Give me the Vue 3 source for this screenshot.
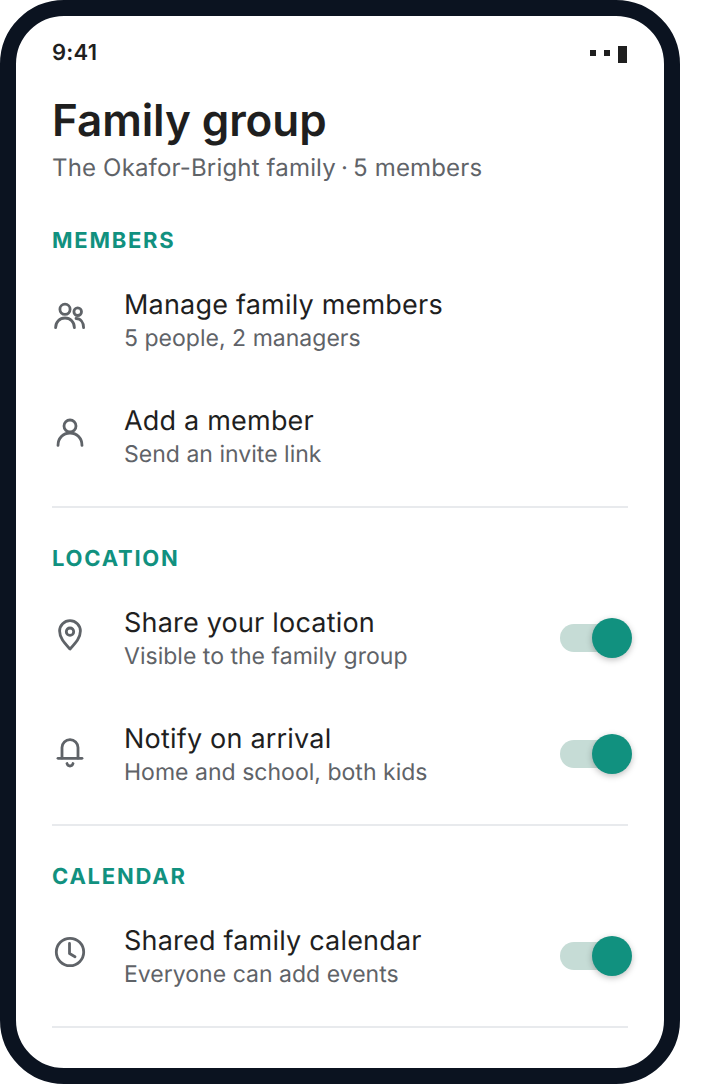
<template>
  <div class="phone">
    <div class="screen">
      <div class="status-bar">
        <span class="time">9:41</span>
        <div class="status-icons">
          <span class="dot"></span>
          <span class="dot"></span>
          <span class="battery"></span>
        </div>
      </div>

      <header class="page-head">
        <h1>Family group</h1>
        <p>The Okafor-Bright family <span class="sep">·</span> 5 members</p>
      </header>

      <section v-for="section in sections" :key="section.title" class="section">
        <h2>{{ section.title }}</h2>
        <div v-for="row in section.rows" :key="row.title" class="row">
          <svg class="icon" viewBox="0 0 36 36" fill="none" stroke="#5f6368" stroke-width="2.8" stroke-linecap="round" stroke-linejoin="round">
            <g v-if="row.icon === 'people'">
              <circle cx="13" cy="11.3" r="5.1" />
              <circle cx="25.7" cy="13.7" r="3.8" />
              <path d="M3.6 29.700c0-5.500 4-9.700 9.400-9.700s9.400 4.200 9.400 9.700" />
              <path d="M24 20.500c4.500 0 7.600 3.700 7.600 9.200" />
            </g>
            <g v-else-if="row.icon === 'person'">
              <circle cx="18" cy="12" r="6" />
              <path d="M6 31.400c0-7 5-12.400 12-12.400s12 5.400 12 12.400" />
            </g>
            <g v-else-if="row.icon === 'pin'">
              <path d="M18 33C12.500 27 7.600 22 7.600 15a10.400 10.400 0 0 1 20.800 0C28.400 22 23.500 27 18 33z" />
              <circle cx="18" cy="15.700" r="3.700" />
            </g>
            <g v-else-if="row.icon === 'bell'">
              <path d="M10 26V15.600a8 8 0 0 1 16 0V26" />
              <path d="M6 26.300h24" />
              <path d="M15 31.500c.5 2 1.500 2.500 3 2.500s2.500-.5 3-2.500" />
            </g>
            <g v-else>
              <circle cx="18" cy="18" r="13.700" />
              <path d="M17.500 9.500v10l5.500 3.200" />
            </g>
          </svg>
          <div class="row-text">
            <div class="row-title">{{ row.title }}</div>
            <div class="row-sub">{{ row.sub }}</div>
          </div>
          <div v-if="row.toggle" class="toggle">
            <span class="knob"></span>
          </div>
        </div>
      </section>
    </div>
  </div>
</template>

<script setup>
const sections = [
  {
    title: "MEMBERS",
    rows: [
      { icon: "people", title: "Manage family members", sub: "5 people, 2 managers" },
      { icon: "person", title: "Add a member", sub: "Send an invite link" },
    ],
  },
  {
    title: "LOCATION",
    rows: [
      { icon: "pin", title: "Share your location", sub: "Visible to the family group", toggle: true },
      { icon: "bell", title: "Notify on arrival", sub: "Home and school, both kids", toggle: true },
    ],
  },
  {
    title: "CALENDAR",
    rows: [
      { icon: "clock", title: "Shared family calendar", sub: "Everyone can add events", toggle: true },
    ],
  },
];
</script>

<style>
html,
body {
  background: #fff;
}
</style>

<style scoped>
.phone {
  width: 680px;
  height: 1084px;
  box-sizing: border-box;
  border: 16px solid #0b1320;
  border-radius: 64px;
  overflow: hidden;
  background: #fff;
  font-family: Inter, "Liberation Sans", sans-serif;
  color: #1f1f1f;
  text-rendering: geometricPrecision;
}

.screen {
  padding: 0 36px;
}

.status-bar {
  height: 72px;
  display: flex;
  align-items: center;
  justify-content: space-between;
}

.time {
  margin-top: 2px;
  font-size: 22px;
  font-weight: 600;
  letter-spacing: 0.2px;
}

.status-icons {
  display: flex;
  align-items: center;
  gap: 8px;
  margin: 5px 1px 0 0;
}

.dot {
  width: 6px;
  height: 5.500px;
  margin-bottom: 3px;
  background: #1f1f1f;
}

.battery {
  width: 9.500px;
  height: 17.500px;
  background: #1f1f1f;
}

.page-head {
  padding-bottom: 42px;
}

h1 {
  margin: 6px 0 6px;
  font-size: 44px;
  line-height: 52px;
  font-weight: 600;
  letter-spacing: -0.08px;
}

.page-head p {
  margin: 0;
  font-size: 24px;
  line-height: 32px;
  letter-spacing: 0.17px;
  color: #5f6368;
}

.sep {
  margin: 0 -1.900px;
}

.section {
  border-bottom: 2px solid #e8eaed;
  padding-bottom: 12px;
  margin-bottom: 36px;
}

h2 {
  margin: 0 0 7px;
  padding-top: 1px;
  font-size: 22px;
  line-height: 28px;
  font-weight: 700;
  letter-spacing: 1.760px;
  color: #11917f;
}

.row {
  height: 116px;
  display: flex;
  align-items: center;
}

.icon {
  width: 36px;
  height: 36px;
  flex: none;
  margin: 0 36px 8px 0;
}

.row-text {
  flex: 1;
  padding-top: 4px;
}

.row-title {
  font-size: 27px;
  line-height: 32px;
  letter-spacing: 0.2px;
}

.row-sub {
  font-size: 23px;
  line-height: 34px;
  letter-spacing: 0.02px;
  color: #5f6368;
}

.toggle {
  position: relative;
  width: 68px;
  height: 28px;
  border-radius: 14px;
  background: #c6dcd6;
}

.knob {
  position: absolute;
  top: -6px;
  right: -4px;
  width: 40px;
  height: 40px;
  border-radius: 50%;
  background: #11917f;
  box-shadow: 0 2px 6px rgba(0, 0, 0, 0.25);
}
</style>
